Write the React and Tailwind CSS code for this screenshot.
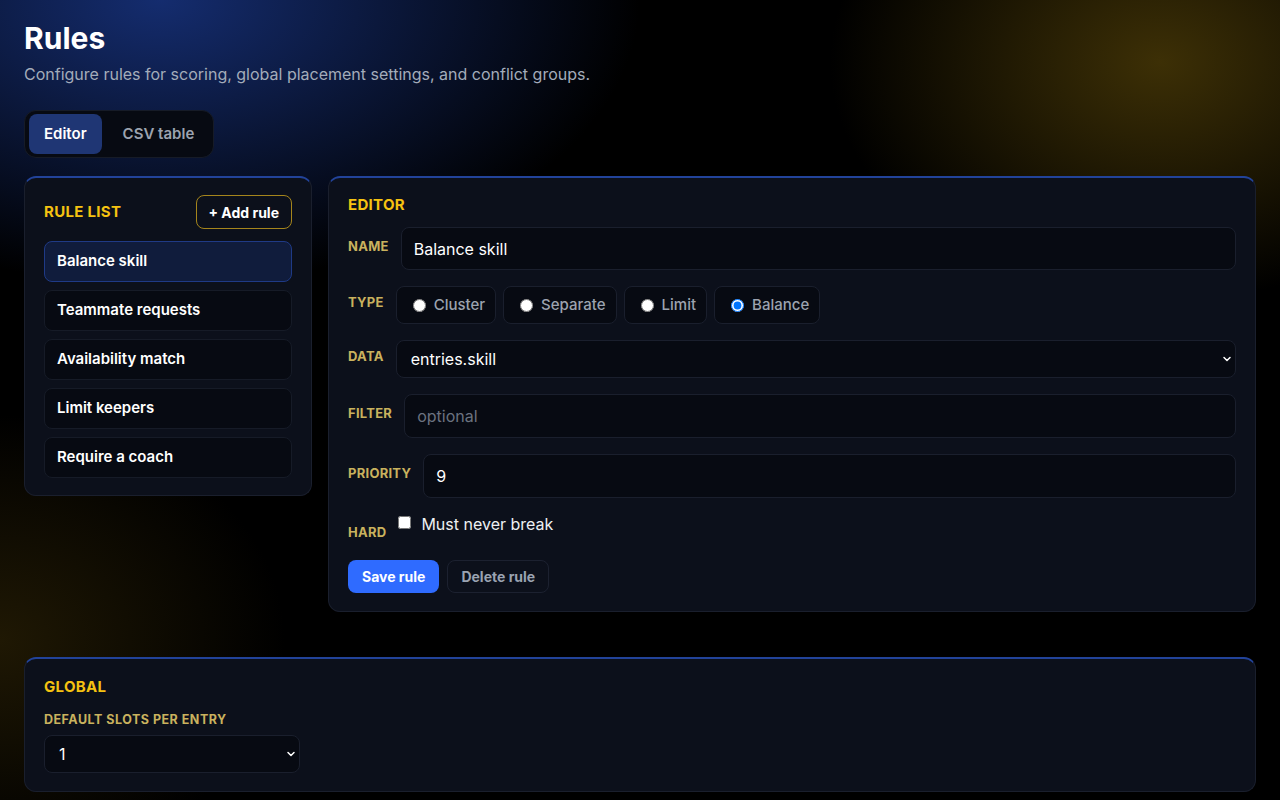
import React, { useState } from "react";
import { ChevronDown } from "lucide-react";

const rules = [
  "Balance skill",
  "Teammate requests",
  "Availability match",
  "Limit keepers",
  "Require a coach",
];

const types = ["Cluster", "Separate", "Limit", "Balance"];

function Card({ className = "", children }) {
  return (
    <div
      className={
        "rounded-xl border border-[#1a1f2d] border-t-2 border-t-[#22439a] bg-[#0c101b] " +
        className
      }
    >
      {children}
    </div>
  );
}

function FieldLabel({ children, className = "" }) {
  return (
    <div
      className={
        "shrink-0 text-[13px] font-bold uppercase tracking-[0.02em] text-[#c9b25e] " +
        className
      }
    >
      {children}
    </div>
  );
}

export default function App() {
  const [selected, setSelected] = useState(0);
  const [type, setType] = useState("Balance");
  const [tab, setTab] = useState("editor");

  return (
    <div
      className="min-h-screen bg-black bg-[image:radial-gradient(ellipse_640px_380px_at_160px_0px,rgba(24,52,130,0.85),transparent_75%),radial-gradient(ellipse_440px_320px_at_1160px_62px,rgba(64,50,6,0.95),transparent_75%),radial-gradient(ellipse_380px_300px_at_0px_640px,rgba(52,40,6,0.6),transparent_75%)] px-6 pt-5 pb-2 text-white"
      style={{ fontFamily: "Inter, 'Noto Sans', sans-serif" }}
    >
      {/* Header */}
      <h1 className="text-[30px] font-bold leading-9">Rules</h1>
      <p className="mt-1.5 text-[16px] leading-6 text-[#a3acba]">
        Configure rules for scoring, global placement settings, and conflict groups.
      </p>

      {/* Tabs */}
      <div className="mt-6 inline-flex gap-[6px] rounded-xl border border-[#161b27] bg-[#070a12] px-1 py-[3px]">
        <button
          onClick={() => setTab("editor")}
          className={
            "h-10 rounded-lg px-[15px] text-[15px] font-semibold " +
            (tab === "editor" ? "bg-[#1f3674] text-white" : "text-[#9ca3af]")
          }
        >
          Editor
        </button>
        <button
          onClick={() => setTab("csv")}
          className={
            "h-10 rounded-lg px-[15px] text-[15px] font-semibold " +
            (tab === "csv" ? "bg-[#1f3674] text-white" : "text-[#9ca3af]")
          }
        >
          CSV table
        </button>
      </div>

      {/* Main grid */}
      <div className="mt-[18px] grid grid-cols-[288px_1fr] items-start gap-[16px]">
        {/* Rule list */}
        <Card className="px-[19px] pt-[17px] pb-[17px]">
          <div className="flex items-center justify-between">
            <h2 className="text-[15px] font-bold uppercase tracking-[0.02em] text-[#f5c211]">
              Rule list
            </h2>
            <button className="h-[34px] rounded-lg border border-[#a5851c] px-3 text-[14px] font-bold text-white">
              + Add rule
            </button>
          </div>
          <div className="mt-[12px] flex flex-col gap-2">
            {rules.map((r, i) => (
              <button
                key={r}
                onClick={() => setSelected(i)}
                className={
                  "h-[41px] rounded-lg border px-3 text-left text-[15px] font-semibold text-white " +
                  (selected === i
                    ? "border-[#1f3a86] bg-[#101c3c]"
                    : "border-[#161b27] bg-[#070a12]")
                }
              >
                {r}
              </button>
            ))}
          </div>
        </Card>

        {/* Editor */}
        <Card className="px-[19px] pt-[17px] pb-[18px]">
          <h2 className="text-[15px] font-bold uppercase leading-5 tracking-[0.02em] text-[#f5c211]">
            Editor
          </h2>
          <div className="mt-[12px] flex flex-col gap-4">
            <div className="flex items-center gap-3">
              <FieldLabel className="-mt-1">Name</FieldLabel>
              <input
                defaultValue={rules[selected]}
                key={selected}
                className="h-[43px] flex-1 rounded-lg border border-[#1a1f2d] bg-[#070a12] px-3 text-[16px] text-white outline-none"
              />
            </div>

            <div className="flex items-center gap-3">
              <FieldLabel className="-mt-1">Type</FieldLabel>
              <div className="flex gap-[7px]">
                {types.map((t) => (
                  <label
                    key={t}
                    className="flex h-[38px] cursor-pointer items-center gap-[8px] rounded-lg border border-[#1a1f2d] bg-[#070a12] pr-[10px] pl-4 text-[15px] font-medium text-[#9ca3af]"
                  >
                    <input
                      type="radio"
                      name="type"
                      checked={type === t}
                      onChange={() => setType(t)}
                      className="m-0 h-[13px] w-[13px]"
                    />
                    {t}
                  </label>
                ))}
              </div>
            </div>

            <div className="flex items-center gap-3">
              <FieldLabel className="-mt-1">Data</FieldLabel>
              <div className="relative flex-1">
                <select className="h-[38px] w-full appearance-none rounded-lg border border-[#1a1f2d] bg-[#070a12] px-[14px] text-[16px] text-white outline-none">
                  <option>entries.skill</option>
                  <option>entries.age</option>
                </select>
                <ChevronDown
                  className="pointer-events-none absolute top-1/2 right-[3px] -translate-y-1/2 text-white"
                  size={12}
                  strokeWidth={3}
                />
              </div>
            </div>

            <div className="flex items-center gap-3">
              <FieldLabel className="-mt-1">Filter</FieldLabel>
              <input
                placeholder="optional"
                className="h-[44px] flex-1 rounded-lg border border-[#1a1f2d] bg-[#070a12] px-3 text-[16px] text-white outline-none placeholder:text-[#6b7280]"
              />
            </div>

            <div className="flex items-center gap-3">
              <FieldLabel className="-mt-1">Priority</FieldLabel>
              <input
                defaultValue="9"
                className="h-[44px] flex-1 rounded-lg border border-[#1a1f2d] bg-[#070a12] px-3 text-[16px] text-white outline-none"
              />
            </div>

            <div className="flex items-start gap-3">
              <FieldLabel className="mt-[9px]">Hard</FieldLabel>
              <label className="mt-[-2px] flex items-center gap-[10px] text-[16px] text-[#eef0f3]">
                <input type="checkbox" className="m-0 -mt-[3px] h-[13px] w-[13px]" />
                Must never break
              </label>
            </div>

            <div className="mt-[1px] flex gap-2">
              <button className="h-[33px] rounded-lg bg-[#2f6bff] px-[14px] text-[14px] font-bold text-white">
                Save rule
              </button>
              <button className="h-[33px] rounded-lg border border-[#1c2130] px-[13px] text-[14px] font-bold text-[#9aa3b2]">
                Delete rule
              </button>
            </div>
          </div>
        </Card>
      </div>

      {/* Global */}
      <Card className="mt-[45px] px-[19px] pt-[18px] pb-[18px]">
        <h2 className="text-[15px] font-bold uppercase leading-5 tracking-[0.02em] text-[#f5c211]">
          Global
        </h2>
        <div className="mt-[15px] text-[12.5px] font-bold uppercase leading-4 tracking-[0.04em] text-[#c9b25e]">
          Default slots per entry
        </div>
        <div className="relative mt-[7px] w-[256px]">
          <select className="h-[38px] w-full appearance-none rounded-lg border border-[#1a1f2d] bg-[#070a12] px-[14px] text-[16px] text-white outline-none">
            <option>1</option>
            <option>2</option>
            <option>3</option>
          </select>
          <ChevronDown
            className="pointer-events-none absolute top-1/2 right-[3px] -translate-y-1/2 text-white"
            size={12}
            strokeWidth={3}
          />
        </div>
      </Card>
    </div>
  );
}
